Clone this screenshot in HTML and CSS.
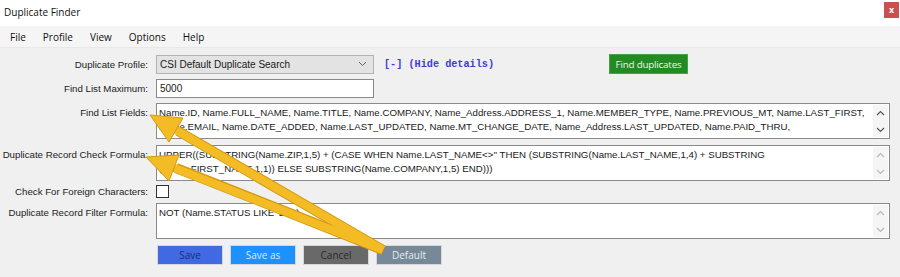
FILE: index.html
```html
<!DOCTYPE html>
<html>
<head>
<meta charset="utf-8">
<link rel="stylesheet" href="styles.css">
</head>
<body>
<div class="window">
  <div class="titlebar">
    <span class="title">Duplicate Finder</span>
    <span class="close">x</span>
  </div>
  <div class="menubar">
    <span class="mi">File</span>
    <span class="mi">Profile</span>
    <span class="mi">View</span>
    <span class="mi">Options</span>
    <span class="mi">Help</span>
  </div>
  <div class="content">
    <div class="row r-profile">
      <span class="lbl">Duplicate Profile:</span>
      <div class="select">
        <span>CSI Default Duplicate Search</span>
        <svg class="chev" width="9" height="6" viewBox="0 0 9 6"><path d="M1 1 L4.5 4.5 L8 1" fill="none" stroke="#606060" stroke-width="1"/></svg>
      </div>
      <span class="toggle">[-] (Hide details)</span>
      <span class="btn-find">Find duplicates</span>
    </div>
    <div class="row r-max">
      <span class="lbl">Find List Maximum:</span>
      <div class="input">5000</div>
    </div>
    <div class="row r-area r-fields">
      <span class="lbl">Find List Fields:</span>
      <div class="area">
        <div class="text">
          <div>Name.ID, Name.FULL_NAME, Name.TITLE, Name.COMPANY, Name_Address.ADDRESS_1, Name.MEMBER_TYPE, Name.PREVIOUS_MT, Name.LAST_FIRST,</div>
          <div>Name.EMAIL, Name.DATE_ADDED, Name.LAST_UPDATED, Name.MT_CHANGE_DATE, Name_Address.LAST_UPDATED, Name.PAID_THRU,</div>
        </div>
        <div class="sbar on">
          <svg width="9" height="6" viewBox="0 0 9 6"><path d="M1 5 L4.5 1.5 L8 5" fill="none" stroke="currentColor" stroke-width="1.2"/></svg>
          <svg width="9" height="6" viewBox="0 0 9 6"><path d="M1 1 L4.5 4.5 L8 1" fill="none" stroke="currentColor" stroke-width="1.2"/></svg>
        </div>
      </div>
    </div>
    <div class="row r-area r-formula">
      <span class="lbl">Duplicate Record Check Formula:</span>
      <div class="area">
        <div class="text">
          <div>UPPER((SUBSTRING(Name.ZIP,1,5) + (CASE WHEN Name.LAST_NAME&lt;&gt;'' THEN (SUBSTRING(Name.LAST_NAME,1,4) + SUBSTRING</div>
          <div>(Name.FIRST_NAME,1,1)) ELSE SUBSTRING(Name.COMPANY,1,5) END)))</div>
        </div>
        <div class="sbar">
          <svg width="9" height="6" viewBox="0 0 9 6"><path d="M1 5 L4.5 1.5 L8 5" fill="none" stroke="currentColor" stroke-width="1.2"/></svg>
          <svg width="9" height="6" viewBox="0 0 9 6"><path d="M1 1 L4.5 4.5 L8 1" fill="none" stroke="currentColor" stroke-width="1.2"/></svg>
        </div>
      </div>
    </div>
    <div class="row r-check">
      <span class="lbl">Check For Foreign Characters:</span>
      <span class="checkbox"></span>
    </div>
    <div class="row r-area r-filter">
      <span class="lbl">Duplicate Record Filter Formula:</span>
      <div class="area">
        <div class="text">
          <div>NOT (Name.STATUS LIKE 'D%')</div>
        </div>
        <div class="sbar">
          <svg width="9" height="6" viewBox="0 0 9 6"><path d="M1 5 L4.5 1.5 L8 5" fill="none" stroke="currentColor" stroke-width="1.2"/></svg>
          <svg width="9" height="6" viewBox="0 0 9 6"><path d="M1 1 L4.5 4.5 L8 1" fill="none" stroke="currentColor" stroke-width="1.2"/></svg>
        </div>
      </div>
    </div>
    <div class="row r-buttons">
      <span class="btn b-save">Save</span>
      <span class="btn b-saveas">Save as</span>
      <span class="btn b-cancel">Cancel</span>
      <span class="btn b-default">Default</span>
    </div>
  </div>
  <svg class="arrows" width="900" height="277" viewBox="0 0 900 277">
    <g stroke-linecap="butt">
      <line x1="383" y1="250" x2="178" y2="131" stroke="#d39a14" stroke-width="10"/>
      <line x1="383" y1="250" x2="176" y2="168" stroke="#d39a14" stroke-width="10"/>
      <line x1="383" y1="250" x2="176" y2="130" stroke="#f4bc24" stroke-width="8"/>
      <line x1="383" y1="250" x2="174" y2="167.8" stroke="#f4bc24" stroke-width="8"/>
    </g>
    <polygon points="150,115 169,142 183,118" fill="#f4bc24" stroke="#d39a14" stroke-width="1" stroke-linejoin="round"/>
    <polygon points="146,157 169,181 179,155" fill="#f4bc24" stroke="#d39a14" stroke-width="1" stroke-linejoin="round"/>
  </svg>
</div>
</body>
</html>
```
FILE: styles.css
```css
* { box-sizing: border-box; }
html, body { margin: 0; padding: 0; }
body {
  background: #f0f0f0;
  font-family: "Liberation Sans", Arial, sans-serif;
  font-size: 9.7px;
  color: #1a1a1a;
}
.window {
  position: relative;
  width: 900px;
  height: 277px;
  overflow: hidden;
  background: #f0f0f0;
}
.titlebar {
  height: 26px;
  background: #ffffff;
  display: flex;
  align-items: center;
  justify-content: space-between;
  padding-left: 4px;
}
.title {
  font-family: "Open Sans", "Noto Sans", sans-serif;
  font-size: 10px;
  color: #111;
  margin-top: -2px;
}
.close {
  width: 15px;
  height: 16px;
  background: #c9504f;
  color: #fff;
  font-size: 8px;
  font-weight: bold;
  display: flex;
  align-items: center;
  justify-content: center;
  margin-top: -6px;
  margin-right: 1px;
  font-family: "DejaVu Sans", sans-serif;
}
.menubar {
  height: 22px;
  background: #f5f5f5;
  border-bottom: 1px solid #e8e8e8;
  display: flex;
  align-items: center;
  padding-left: 10px;
  gap: 17px;
  font-family: "Open Sans", "Noto Sans", sans-serif;
  font-size: 10px;
  color: #111;
}
.content {
  padding-top: 6px;
  display: flex;
  flex-direction: column;
}
.row {
  display: flex;
  align-items: center;
}
.lbl {
  width: 148px;
  text-align: right;
  margin-right: 8px;
  color: #222;
  flex: none;
}
.r-profile { height: 20px; }
.select {
  width: 218px;
  height: 19px;
  background: #e3e3e3;
  border: 1px solid #b3b3b3;
  display: flex;
  align-items: center;
  justify-content: space-between;
  padding: 0 6px 0 3px;
  font-size: 10px;
}
.toggle {
  font-family: "Liberation Mono", "Courier New", monospace;
  font-size: 10.2px;
  color: #3c3cd6;
  margin-left: 10px;
  width: 225px;
  font-weight: bold;
}
.btn-find {
  width: 79px;
  height: 20px;
  background: #228b22;
  border: 1px solid #4aa04a;
  color: #eef5ee;
  display: flex;
  align-items: center;
  justify-content: center;
  font-family: "Open Sans", "Noto Sans", sans-serif;
  font-size: 9.8px;
  letter-spacing: -0.2px;
}
.r-max { margin-top: 5px; height: 19px; }
.input {
  width: 218px;
  height: 19px;
  background: #fff;
  border: 1px solid #8a8a8a;
  padding-left: 3px;
  display: flex;
  align-items: center;
  font-size: 10px;
}
.r-area { align-items: flex-start; }
.r-area .lbl { padding-top: 4px; }
.r-fields { margin-top: 5px; }
.r-formula { margin-top: 6px; }
.r-filter { margin-top: 5px; }
.area {
  width: 734px;
  height: 36px;
  background: #fff;
  border: 1px solid #8a8a8a;
  display: flex;
  justify-content: space-between;
}
.area .text {
  padding: 2px 0 0 2px;
  line-height: 13.5px;
  white-space: nowrap;
  overflow: hidden;
}
.sbar {
  width: 15px;
  margin: 1px 1px 1px 0;
  background: #f5f5f5;
  display: flex;
  flex-direction: column;
  align-items: center;
  justify-content: space-between;
  padding: 5px 0 4px;
  color: #b8b8b8;
  flex: none;
}
.sbar.on { color: #555; }
.r-check { margin-top: 4px; height: 13px; }
.checkbox {
  width: 13px;
  height: 13px;
  background: #fff;
  border: 1px solid #333;
}
.r-buttons {
  margin-top: 6px;
  padding-left: 157px;
  gap: 7px;
}
.btn {
  width: 66px;
  height: 20px;
  display: flex;
  align-items: center;
  justify-content: center;
  font-family: "Open Sans", "Noto Sans", sans-serif;
  font-size: 10px;
  border: 1px solid #d4d8de;
}
.b-save { background: #4169e1; color: #1b2f7e; }
.b-saveas { background: #1e90ff; color: #d8eaff; }
.b-cancel { background: #696969; color: #2a2a2a; }
.b-default { background: #778899; color: #e6ebf0; }
.arrows {
  position: absolute;
  left: 0;
  top: 0;
  pointer-events: none;
}
```
